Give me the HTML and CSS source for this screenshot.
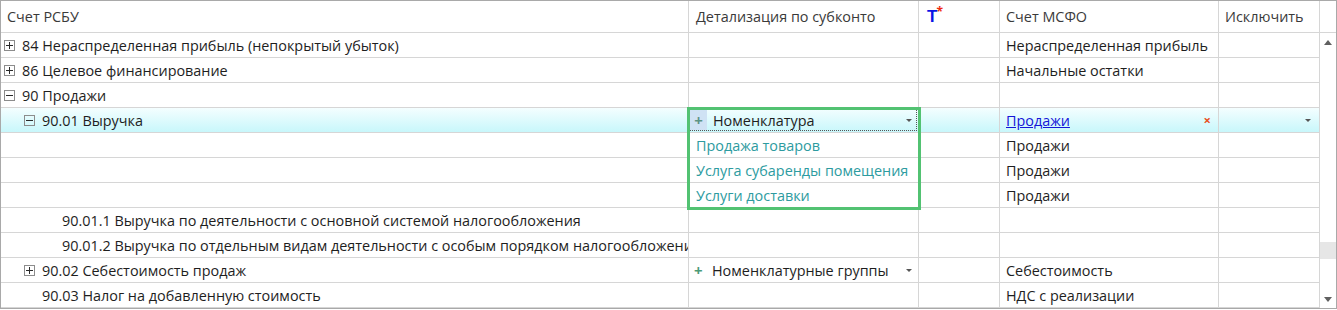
FILE: index.html
```html
<!DOCTYPE html>
<html lang="ru">
<head>
    <meta charset="UTF-8">
    <title>Соответствие счетов</title>
    <link rel="stylesheet" href="styles.css">
</head>
<body>
    <div class="frame">
        <!-- Header -->
        <div class="head">
            <div class="hcell">Счет РСБУ</div>
            <div class="hcell hc2">Детализация по субконто</div>
            <div class="hcell hc3"><span class="t-icon">T</span><span class="t-star">*</span></div>
            <div class="hcell">Счет МСФО</div>
            <div class="hcell">Исключить</div>
            <div class="hcell hblank"></div>
        </div>

        <div class="body">
            <div class="rows">
                <div class="row">
                    <div class="cell tree l0"><span class="exp plus"></span>84 Нераспределенная прибыль (непокрытый убыток)</div>
                    <div class="cell"></div>
                    <div class="cell"></div>
                    <div class="cell c4">Нераспределенная прибыль</div>
                    <div class="cell"></div>
                </div>
                <div class="row">
                    <div class="cell tree l0"><span class="exp plus"></span>86 Целевое финансирование</div>
                    <div class="cell"></div>
                    <div class="cell"></div>
                    <div class="cell c4">Начальные остатки</div>
                    <div class="cell"></div>
                </div>
                <div class="row">
                    <div class="cell tree l0"><span class="exp minus"></span>90 Продажи</div>
                    <div class="cell"></div>
                    <div class="cell"></div>
                    <div class="cell c4"></div>
                    <div class="cell"></div>
                </div>
                <div class="row selected">
                    <div class="cell tree l1"><span class="exp minus"></span>90.01 Выручка</div>
                    <div class="cell editor-cell">
                        <div class="editor">
                            <span class="add-btn">+</span>
                            <span class="editor-text">Номенклатура</span>
                            <span class="arrow"></span>
                        </div>
                    </div>
                    <div class="cell"></div>
                    <div class="cell c4 link-cell"><a href="#" class="link">Продажи</a><span class="clear">×</span></div>
                    <div class="cell c5"><span class="arrow"></span></div>
                </div>
                <div class="row">
                    <div class="cell"></div>
                    <div class="cell c2 item">Продажа товаров</div>
                    <div class="cell"></div>
                    <div class="cell c4">Продажи</div>
                    <div class="cell"></div>
                </div>
                <div class="row">
                    <div class="cell"></div>
                    <div class="cell c2 item">Услуга субаренды помещения</div>
                    <div class="cell"></div>
                    <div class="cell c4">Продажи</div>
                    <div class="cell"></div>
                </div>
                <div class="row">
                    <div class="cell"></div>
                    <div class="cell c2 item">Услуги доставки</div>
                    <div class="cell"></div>
                    <div class="cell c4">Продажи</div>
                    <div class="cell"></div>
                </div>
                <div class="row">
                    <div class="cell tree l2">90.01.1 Выручка по деятельности с основной системой налогообложения</div>
                    <div class="cell"></div>
                    <div class="cell"></div>
                    <div class="cell c4"></div>
                    <div class="cell"></div>
                </div>
                <div class="row">
                    <div class="cell tree l2">90.01.2 Выручка по отдельным видам деятельности с особым порядком налогообложения</div>
                    <div class="cell"></div>
                    <div class="cell"></div>
                    <div class="cell c4"></div>
                    <div class="cell"></div>
                </div>
                <div class="row">
                    <div class="cell tree l1"><span class="exp plus"></span>90.02 Себестоимость продаж</div>
                    <div class="cell c2 combo">
                        <span class="add-plain">+</span>
                        <span class="editor-text">Номенклатурные группы</span>
                        <span class="arrow"></span>
                    </div>
                    <div class="cell"></div>
                    <div class="cell c4">Себестоимость</div>
                    <div class="cell"></div>
                </div>
                <div class="row">
                    <div class="cell tree l1 noexp">90.03 Налог на добавленную стоимость</div>
                    <div class="cell"></div>
                    <div class="cell"></div>
                    <div class="cell c4">НДС с реализации</div>
                    <div class="cell"></div>
                </div>

                <!-- highlight over the subconto list -->
                <div class="focus-box"></div>
            </div>

            <div class="scrollbar">
                <span class="sb-up"></span>
                <div class="sb-track"><div class="sb-thumb"></div></div>
                <span class="sb-down"></span>
            </div>
        </div>
    </div>
</body>
</html>
```

FILE: styles.css
```css
body {
    margin: 0;
    padding: 0;
    background: #ffffff;
    font-family: "Open Sans", "Noto Sans", sans-serif;
    font-size: 14.4px;
    color: #1e1e1e;
}

.frame {
    width: 1337px;
    height: 309px;
    box-sizing: border-box;
    border: 1px solid #a9a9a9;
    overflow: hidden;
}

/* Header */
.head {
    display: grid;
    grid-template-columns: 688px 230px 81px 219px 101px 16px;
    height: 32px;
    border-bottom: 1px solid #d6d6d6;
    box-sizing: border-box;
}

.hcell {
    border-right: 1px solid #d6d6d6;
    padding-left: 6px;
    display: flex;
    align-items: center;
    color: #3a3a3a;
    white-space: nowrap;
    overflow: hidden;
}

.hc2 {
    padding-left: 7px;
}

.hc3 {
    padding-left: 8px;
    align-items: flex-start;
    padding-top: 6px;
}

.hblank {
    border-right: none;
}

.t-icon {
    color: #0a14e6;
    font-family: "Liberation Sans", sans-serif;
    font-weight: bold;
    font-size: 17px;
    line-height: 20px;
}

.t-star {
    color: #ee2a10;
    font-weight: bold;
    font-size: 12px;
    line-height: 10px;
    margin-left: -1px;
}

/* Body */
.body {
    display: flex;
}

.rows {
    position: relative;
    width: 1319px;
}

.row {
    display: grid;
    grid-template-columns: 688px 230px 81px 219px 101px;
    height: 25px;
    box-sizing: border-box;
    border-bottom: 1px solid #d6d6d6;
}

.cell {
    border-right: 1px solid #d6d6d6;
    display: flex;
    align-items: center;
    white-space: nowrap;
    overflow: hidden;
    min-width: 0;
}

.c2 {
    padding-left: 7px;
}

.c4 {
    padding-left: 6px;
}

.tree.l0 { padding-left: 3px; }
.tree.l1 { padding-left: 23px; }
.tree.l1.noexp { padding-left: 41px; }
.tree.l2 { padding-left: 61px; }

/* Tree expander */
.exp {
    width: 11px;
    height: 11px;
    box-sizing: border-box;
    border: 1px solid #8c8c8c;
    margin-right: 7px;
    flex: none;
    position: relative;
}

.exp::before {
    content: "";
    position: absolute;
    left: 1px;
    top: 4px;
    width: 7px;
    height: 1px;
    background: #2a2a2a;
}

.exp.plus::after {
    content: "";
    position: absolute;
    left: 4px;
    top: 1px;
    width: 1px;
    height: 7px;
    background: #2a2a2a;
}

/* Selected row */
.row.selected {
    background: linear-gradient(#f4feff, #c8f7fb);
}

.editor-cell {
    padding: 1px;
}

.editor {
    display: flex;
    align-items: center;
    width: 100%;
    height: 100%;
    box-sizing: border-box;
    border: 1px dotted #555555;
    border-left: none;
}

.editor .arrow {
    margin-right: 4px;
}

.add-btn {
    width: 17px;
    height: 100%;
    background: #cfe2f4;
    color: #5d9384;
    font-weight: bold;
    font-size: 15px;
    display: flex;
    align-items: center;
    justify-content: center;
    margin-right: 6px;
}

.editor-text {
    flex: 1;
}

.combo {
    padding-left: 5px;
    padding-right: 0;
}

.combo .arrow {
    margin-right: 6px;
}

.add-plain {
    color: #4b9a77;
    font-weight: bold;
    font-size: 15px;
    width: 10px;
    margin-right: 8px;
}

.arrow {
    width: 0;
    height: 0;
    border-left: 3px solid transparent;
    border-right: 3px solid transparent;
    border-top: 3px solid #555555;
    margin-right: 7px;
    margin-top: 1px;
}

.c5 {
    justify-content: flex-end;
    padding-right: 1px;
}

.link-cell {
    justify-content: space-between;
    padding-right: 7px;
}

.link {
    color: #1515d8;
    text-decoration: underline;
}

.clear {
    color: #e8501f;
    font-weight: bold;
    font-size: 13px;
}

.item {
    color: #2d9ba0;
}

/* Green highlight around the subconto list */
.focus-box {
    position: absolute;
    left: 686px;
    top: 74px;
    width: 234px;
    height: 103px;
    box-sizing: border-box;
    border: 3px solid #52c272;
    pointer-events: none;
}

/* Scrollbar */
.scrollbar {
    width: 16px;
    display: flex;
    flex-direction: column;
    align-items: center;
    height: 275px;
}

.sb-up, .sb-down {
    width: 0;
    height: 0;
    border-left: 4px solid transparent;
    border-right: 4px solid transparent;
}

.sb-up {
    border-bottom: 5px solid #606060;
    margin-top: 7px;
}

.sb-down {
    border-top: 5px solid #606060;
    margin-bottom: 6px;
}

.sb-track {
    flex: 1;
    width: 16px;
}

.sb-thumb {
    margin-top: 197px;
    height: 17px;
    background: #e6e6e6;
}
```
